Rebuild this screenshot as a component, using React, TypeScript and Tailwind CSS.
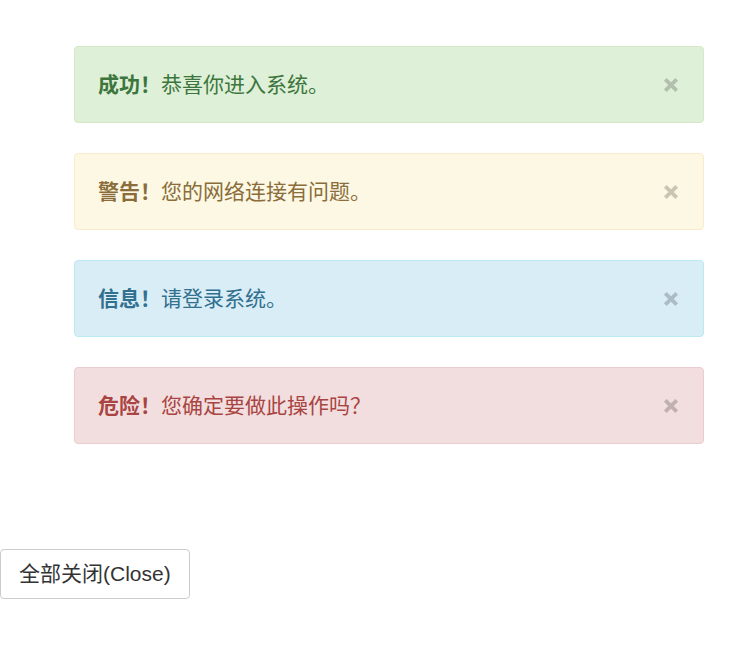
import React, { useState } from 'react';

type Alert = {
  id: number;
  title: string;
  text: string;
  box: string;
};

const ALERTS: Alert[] = [
  { id: 1, title: '成功！', text: '恭喜你进入系统。', box: 'bg-[#dff0d8] border-[#d6e9c6] text-[#3c763d]' },
  { id: 2, title: '警告！', text: '您的网络连接有问题。', box: 'bg-[#fcf8e3] border-[#faebcc] text-[#8a6d3b]' },
  { id: 3, title: '信息！', text: '请登录系统。', box: 'bg-[#d9edf7] border-[#bce8f1] text-[#31708f]' },
  { id: 4, title: '危险！', text: '您确定要做此操作吗？', box: 'bg-[#f2dede] border-[#ebccd1] text-[#a94442]' },
];

const CloseIcon = () => (
  <svg width="16" height="16" viewBox="0 0 16 16" className="block">
    <path d="M2.3 2.3 L13.7 13.7 M13.7 2.3 L2.3 13.7" stroke="currentColor" strokeWidth="3.8" />
  </svg>
);

const App = () => {
  const [open, setOpen] = useState<number[]>(ALERTS.map((a) => a.id));

  const close = (id: number) => setOpen((prev) => prev.filter((x) => x !== id));

  return (
    <div
      className="min-h-screen bg-white"
      style={{ fontFamily: '"Liberation Sans", "Noto Sans CJK SC", sans-serif' }}
    >
      <div className="pt-[46px] pl-[74px] flex flex-col gap-[30px] w-[704px] min-h-[444px]">
        {ALERTS.filter((a) => open.includes(a.id)).map((a) => (
          <div
            key={a.id}
            className={`flex items-center justify-between border rounded-[4px] pl-[23px] pr-[24px] py-[24px] text-[21px] leading-[27px] ${a.box}`}
          >
            <p>
              <strong className="font-bold">{a.title}</strong>
              {a.text}
            </p>
            <button
              type="button"
              onClick={() => close(a.id)}
              className="text-black opacity-20 hover:opacity-50 cursor-pointer"
            >
              <CloseIcon />
            </button>
          </div>
        ))}
      </div>

      <div className="mt-[105px]">
        <button
          type="button"
          onClick={() => setOpen([])}
          className="border border-[#ccc] rounded-[4px] bg-white text-[#333] text-[21px] leading-[28px] py-[10px] px-[18px] hover:bg-[#e6e6e6]"
        >
          全部关闭(Close)
        </button>
      </div>
    </div>
  );
};

export default App;
